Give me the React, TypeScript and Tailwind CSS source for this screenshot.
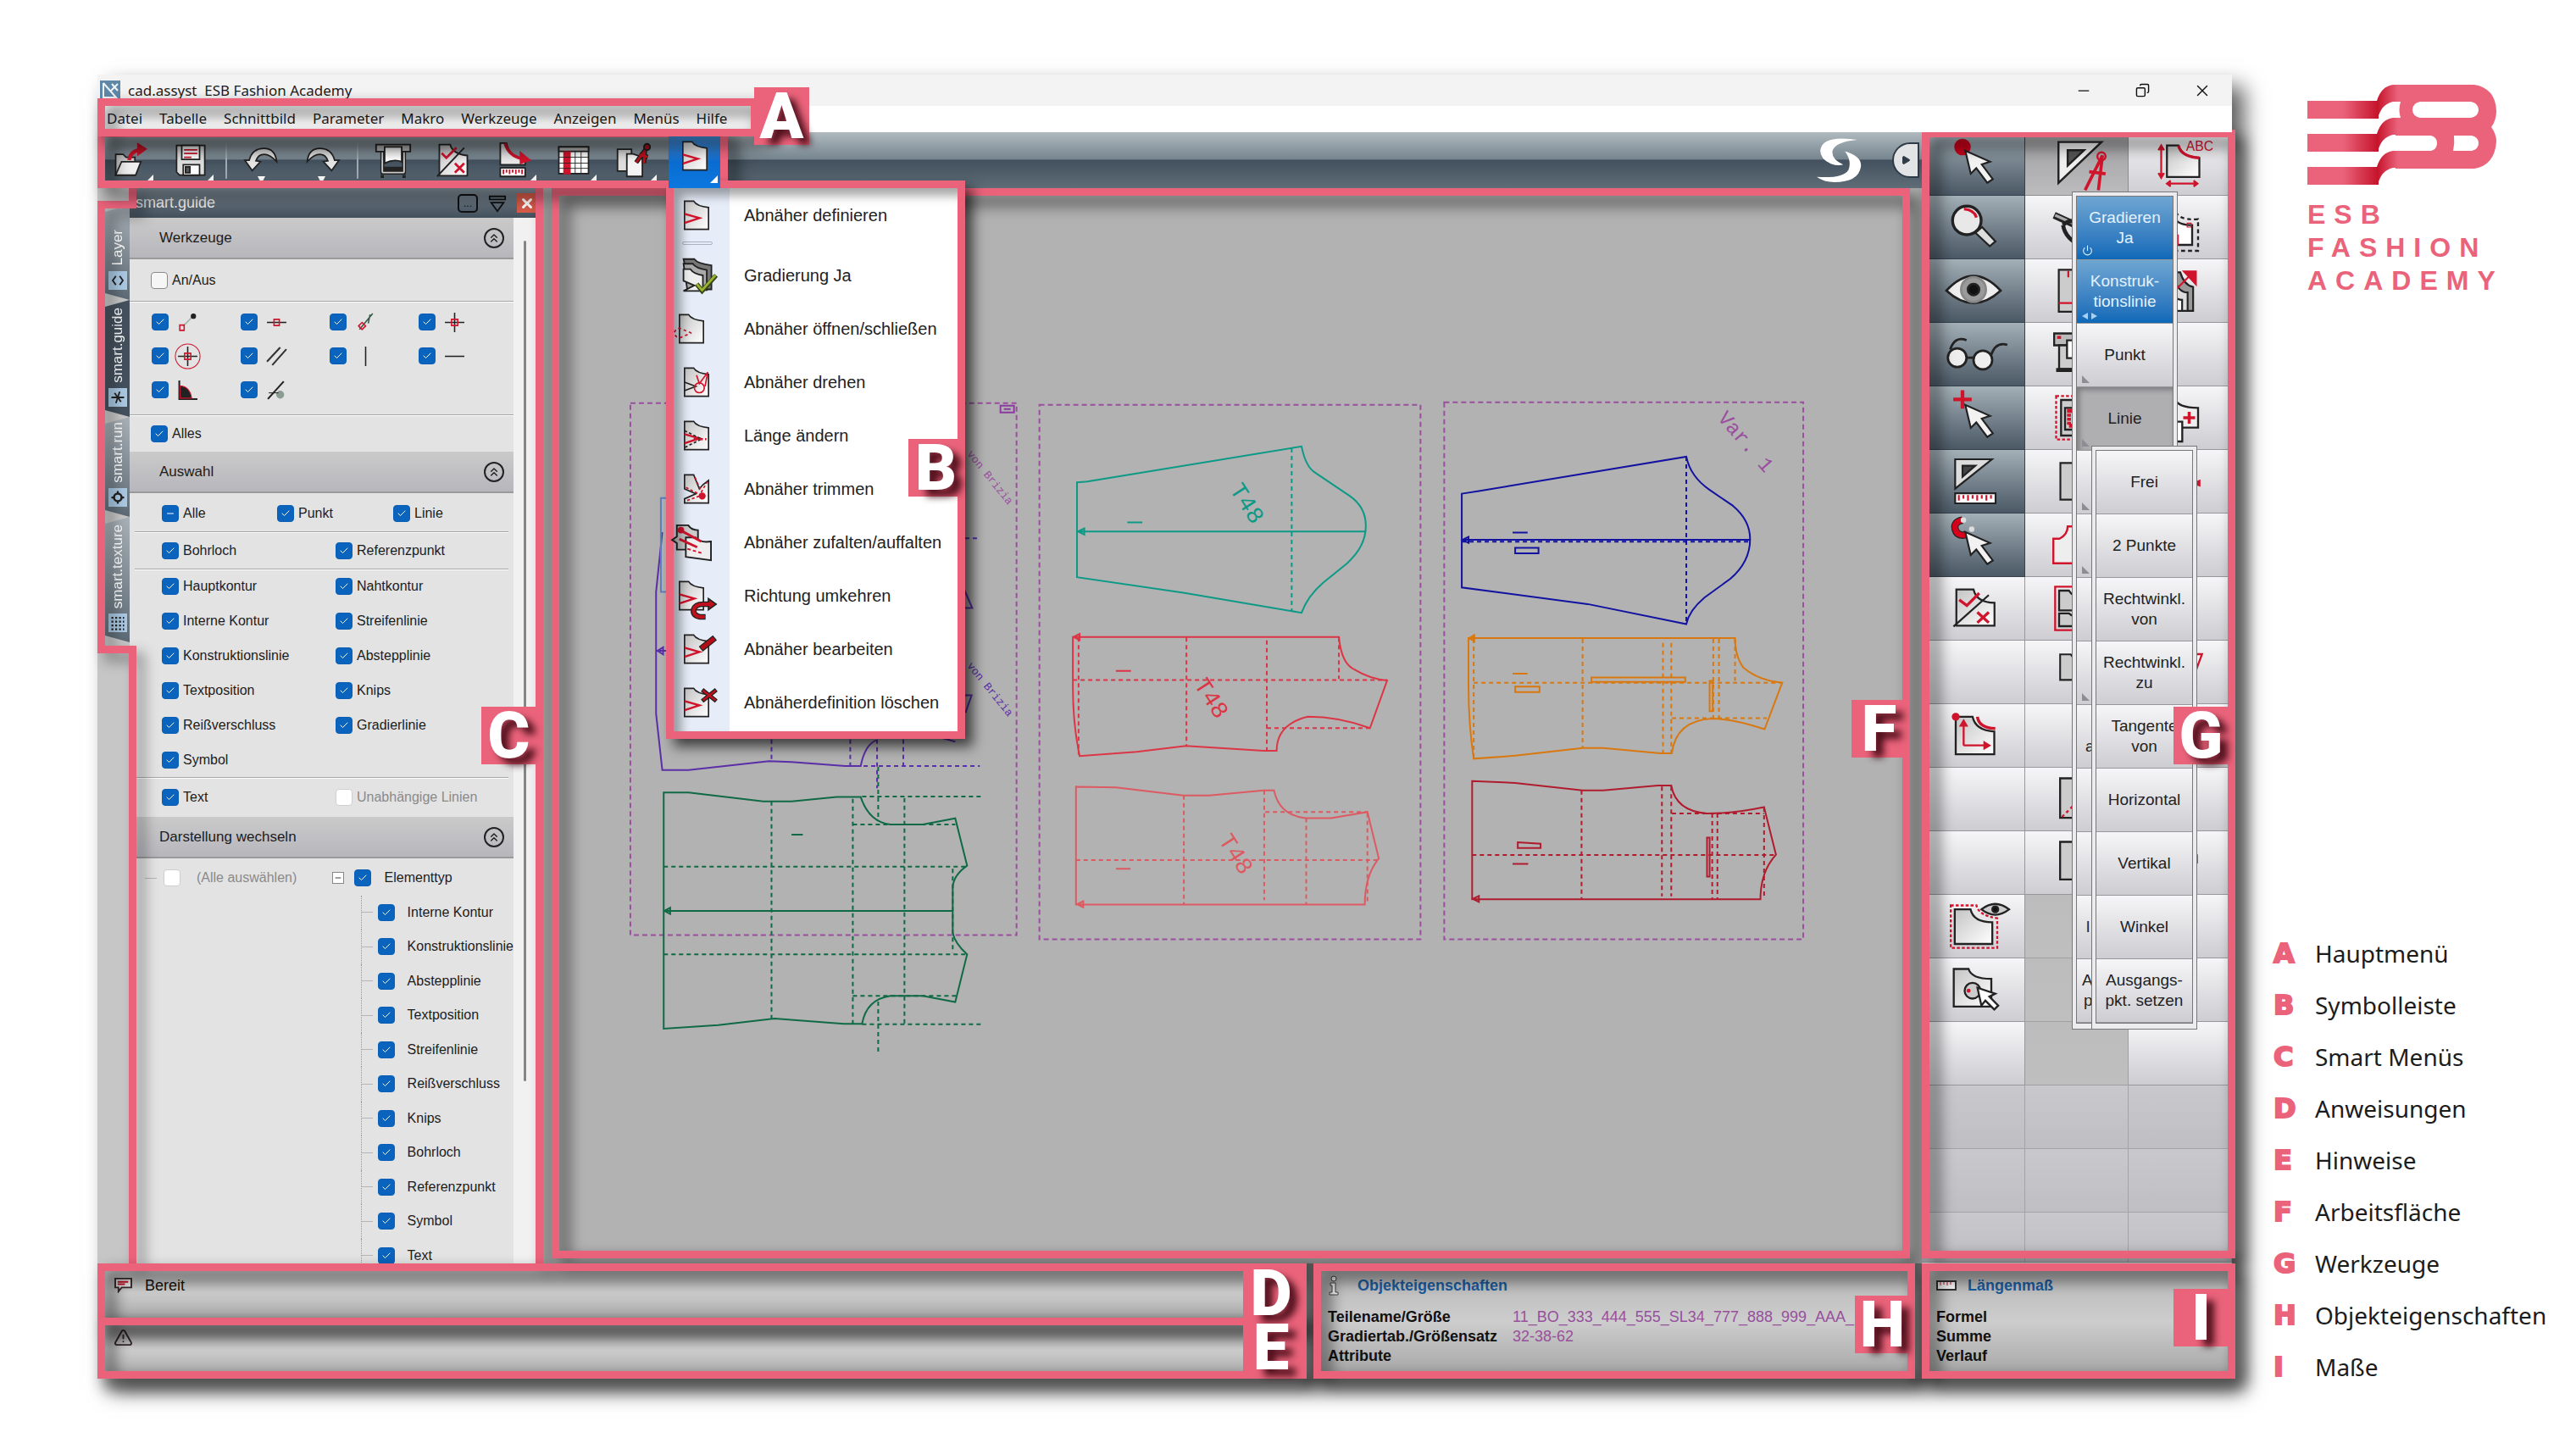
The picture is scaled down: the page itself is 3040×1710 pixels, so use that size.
import React from 'react';
import { Check, Minus, X, ChevronsUp, Copy, Play, AlertTriangle, Power } from 'lucide-react';

const MENU = ['Datei', 'Tabelle', 'Schnittbild', 'Parameter', 'Makro', 'Werkzeuge', 'Anzeigen', 'Menüs', 'Hilfe'];

const LINE_TYPES = [
  'Hauptkontur', 'Nahtkontur',
  'Interne Kontur', 'Streifenlinie',
  'Konstruktionslinie', 'Abstepplinie',
  'Textposition', 'Knips',
  'Reißverschluss', 'Gradierlinie',
  'Symbol'
];

const TREE = [
  'Interne Kontur', 'Konstruktionslinie', 'Abstepplinie', 'Textposition', 'Streifenlinie', 'Reißverschluss',
  'Knips', 'Bohrloch', 'Referenzpunkt', 'Symbol', 'Text'
];

const LEGEND = [
  ['A', 'Hauptmenü'], ['B', 'Symbolleiste'], ['C', 'Smart Menüs'], ['D', 'Anweisungen'], ['E', 'Hinweise'],
  ['F', 'Arbeitsfläche'], ['G', 'Werkzeuge'], ['H', 'Objekteigenschaften'], ['I', 'Maße']
];

const K = '#222';
const R = '#d0142c';

/* ---------- small building blocks ---------- */

const Icon: React.FC<{ children: React.ReactNode; className?: string }> = ({ children, className = 'w-12 h-12' }) => (
  <svg viewBox="0 0 48 48" className={`shrink-0 overflow-visible ${className}`} fill="none" stroke={K} strokeWidth="2" aria-hidden="true">
    {children}
  </svg>
);

const Letter: React.FC<{ letter: string }> = ({ letter }) => (
  <span className="text-[76px] leading-[64px] font-black text-white font-['Roboto','Liberation_Sans',sans-serif] [text-shadow:9px_8px_8px_rgba(50,0,10,0.85)]">
    {letter}
  </span>
);

const Badge: React.FC<{ letter: string; className: string }> = ({ letter, className }) => (
  <div className={`absolute z-40 flex h-[68px] w-[65px] items-center justify-center bg-[#ea637b] ${className}`}>
    <Letter letter={letter} />
  </div>
);

const Frame: React.FC<{ className: string }> = ({ className }) => (
  <div className={`pointer-events-none absolute z-20 border-[9px] border-[#ea637b] drop-shadow-[10px_10px_9px_rgba(0,0,0,0.7)] ${className}`} />
);

const Tick: React.FC<{ label?: string; name?: string; state?: 'on' | 'off' | 'mixed'; disabled?: boolean; gap?: string }> = ({
  label, name, state = 'on', disabled, gap = 'gap-[5px]'
}) => (
  <label className={`flex items-center whitespace-nowrap ${gap} ${disabled ? 'text-[#8a8a8a]' : ''}`}>
    <span className="relative flex h-[20px] w-[20px] shrink-0">
      <input
        type="checkbox"
        aria-label={label ? undefined : name}
        defaultChecked={state !== 'off'}
        disabled={disabled}
        className="h-[20px] w-[20px] appearance-none rounded-[4px] border border-[#8b8b8b] bg-[#f6f6f6] checked:border-[#0a5fb5] checked:bg-[#0a63bd] disabled:border-[#cfcfcf] disabled:bg-white"
      />
      {state === 'on' && <Check className="pointer-events-none absolute inset-0 m-auto h-[12px] w-[12px] text-white" />}
      {state === 'mixed' && <Minus className="pointer-events-none absolute inset-0 m-auto h-[12px] w-[12px] text-white" />}
    </span>
    {label}
  </label>
);

const SectionHead: React.FC<{ title: string }> = ({ title }) => (
  <button type="button" className="flex h-[49px] w-full items-center justify-between border-b-2 border-[#9a9a9c] bg-gradient-to-b from-[#cacaca] to-[#b7b6bc] pr-[11px] pl-[35px] text-[17px]">
    {title}
    <span className="flex h-[24px] w-[24px] items-center justify-center rounded-full border-2 border-[#222]">
      <ChevronsUp className="h-[16px] w-[16px]" />
    </span>
  </button>
);

/* ---------- toolbar icons ---------- */

const OpenIcon = () => (
  <Icon className="h-[42px] w-[42px]">
    <path d="M4 16h10l4 4h12v24H4z" fill="#c9c9c9" />
    <path d="M12 26h26l-7 18H4z" fill="#eee" />
    <path d="M22 24Q24 12 36 10" stroke={R} strokeWidth="5" />
    <path d="M34 2l11 7-11 8z" fill={R} stroke={R} />
  </Icon>
);

const SaveIcon = () => (
  <Icon className="h-[42px] w-[42px]">
    <path d="M5 4h38v40H9l-4-4z" fill="#ddd" />
    <path d="M12 4h24v19H12z" fill="#fff" />
    <path d="M15 10h18M15 15h18M15 20h10" stroke={R} />
    <path d="M14 30h22v14H14z" fill="#fff" />
    <path d="M17 33h6v8h-6z" fill="#555" />
  </Icon>
);

const TurnIcon: React.FC<{ flip?: boolean }> = ({ flip }) => (
  <Icon className={`h-[42px] w-[42px] ${flip ? '-scale-x-100' : ''}`}>
    <path d="M1 24l10 14 11-12-6-1q3-9 11-9 8 0 17 10Q42 8 27 8 11 8 7 24z" fill="#e4e4e4" />
  </Icon>
);

const PlotterIcon = () => (
  <Icon className="h-[44px] w-[44px]">
    <path d="M2 4h44v9H2z" fill="#bbb" />
    <path d="M13 7h22v19q-10-4-22 2z" fill="#fff" />
    <path d="M10 13v28M38 13v28M8 40h32M11 35h26" stroke={K} strokeWidth="5" />
    <path d="M10 14v26M38 14v26M10 40h28" stroke="#ccc" strokeWidth="2" />
    <path d="M8 45h4M36 45h4" strokeWidth="4" />
  </Icon>
);

const CheckIcon = () => (
  <Icon className="h-[44px] w-[44px]">
    <path d="M6 4h14q3 12 22 14v26H6z" fill="url(#paper)" />
    <path d="M3 45L38 8" />
    <path d="M9 15l6 6 13-13" stroke={R} strokeWidth="3" />
    <path d="M26 28l12 12M38 28L26 40" stroke={R} strokeWidth="3" />
  </Icon>
);

const RulerPieceIcon = () => (
  <Icon className="h-[44px] w-[44px]">
    <path d="M7 2h8q3 17 24 22v6H7z" fill="#e8e8e8" />
    <path d="M13 2q5 17 22 20" stroke={R} strokeWidth="4" />
    <path d="M33 14l12 10-12 4z" fill={R} stroke={R} />
    <path d="M7 34h32v11H7z" fill="#fff" />
    <path d="M11 36v6M15 36v4M19 36v6M23 36v4M27 36v6M31 36v4M35 36v6" stroke={R} />
  </Icon>
);

const TableIcon = () => (
  <Icon className="h-[42px] w-[42px]">
    <path d="M4 6h40v36H4z" fill="#fff" />
    <path d="M4 6h40v6H4z" fill="#bbb" />
    <path d="M11 13h8v29h-8z" fill={R} stroke={R} />
    <path d="M4 20h40M4 28h40M4 35h40M26 12v30M34 12v30" strokeWidth="1" />
  </Icon>
);

const CopyPieceIcon = () => (
  <Icon className="h-[44px] w-[44px]">
    <path d="M3 10h18v28H3z" fill="#ddd" />
    <path d="M15 16h8l12 4v25H15z" fill="#f4f4f4" />
    <path d="M43 5L27 27M38 12l-1 16M31 17l11 3" stroke={K} strokeWidth="6" />
    <path d="M43 5L27 27M38 12l-1 16M31 17l11 3" stroke="#c0101c" strokeWidth="3" />
    <circle cx="41" cy="7" r="4" fill="#c0101c" />
  </Icon>
);

const DartIcon: React.FC<{ extra?: React.ReactNode; dart?: boolean; size?: string }> = ({ extra, dart = true, size = 'w-[40px] h-[40px]' }) => (
  <Icon className={size}>
    <path d="M7 4h13q4 7 21 9v31H7z" fill="url(#paper)" />
    {dart && <path d="M7 22l21 6-21 7" stroke={R} strokeWidth="3" />}
    {extra}
  </Icon>
);

const DART_MENU: { label: string; icon: React.ReactNode }[] = [
  { label: 'Abnäher definieren', icon: <DartIcon /> },
  {
    label: 'Gradierung Ja',
    icon: (
      <Icon className="h-[44px] w-[44px]">
        <path d="M5 3h14q4 6 22 8v31H14z" fill="#777" />
        <path d="M5 9h12q4 6 18 8v26H10z" fill="#aaa" />
        <path d="M5 16h9q4 6 16 8v20H5l14-7-14-6z" fill="#eee" />
        <path d="M22 35l7 9 18-20" stroke="#39451a" strokeWidth="6" />
        <path d="M22 35l7 8 17-19" stroke="#9ab52c" strokeWidth="3" />
      </Icon>
    )
  },
  {
    label: 'Abnäher öffnen/schließen',
    icon: <DartIcon size="w-[40px] h-[40px] -ml-[6px]" dart={false} extra={<path d="M24 30l-17-7q-7 2-7 7t7 7l17-7" stroke={R} strokeDasharray="4 4" />} />
  },
  {
    label: 'Abnäher drehen',
    icon: <DartIcon dart={false} extra={<><path d="M7 24l16 6-16 6" /><circle cx="28" cy="32" r="7" stroke={R} /><path d="M24 14l4 12 12-16-4 20" stroke={R} /></>} />
  },
  {
    label: 'Länge ändern',
    icon: <DartIcon extra={<><path d="M7 17l24 12-24 12" strokeDasharray="4 3" /><path d="M20 29h18" stroke={R} strokeDasharray="5 3" strokeWidth="3" /></>} />
  },
  {
    label: 'Abnäher trimmen',
    icon: (
      <Icon className="h-[40px] w-[40px]">
        <path d="M7 4h13l8 20 5-6 8-6v32H7v-6l16-7-16-7z" fill="url(#paper)" />
        <path d="M9 22l22 11-22 8M22 8l9 20 8-14" stroke={R} strokeDasharray="4 3" />
        <circle cx="32" cy="34" r="4" fill={R} stroke={R} />
      </Icon>
    )
  },
  {
    label: 'Abnäher zufalten/auffalten',
    icon: (
      <Icon className="-ml-[8px] h-[46px] w-[46px]">
        <path d="M5 3h14q4 6 12 6v24H5v-8l-6-4 6-4z" fill="#ccc" />
        <path d="M16 18h12q6 7 19 5v23l-31-4z" fill="#eee" />
        <path d="M9 9l26 14M8 20l22 10" stroke={R} strokeWidth="3" />
        <path d="M18 32l20 6" stroke={R} strokeDasharray="4 3" />
        <circle cx="10" cy="9" r="3" fill={R} stroke={R} />
      </Icon>
    )
  },
  {
    label: 'Richtung umkehren',
    icon: (
      <DartIcon
        size="w-[40px] h-[40px] -ml-[6px]"
        extra={<><path d="M44 54h-8q-10-2-9-10 2-8 14-8h8" stroke={K} strokeWidth="8" /><path d="M48 28l11 8-11 8z" fill="#c0101c" /><path d="M43 54h-7q-10-2-9-10 2-8 14-8h9" stroke="#c0101c" strokeWidth="5" /></>}
      />
    )
  },
  {
    label: 'Abnäher bearbeiten',
    icon: <DartIcon extra={<><path d="M30 24L50 8" stroke={K} strokeWidth="9" /><path d="M31 23L49 9" stroke="#b30d18" strokeWidth="6" /></>} />
  },
  {
    label: 'Abnäherdefinition löschen',
    icon: <DartIcon extra={<><path d="M32 6l20 16M52 6L32 22" stroke={K} strokeWidth="6" /><path d="M33 7l18 14M51 7L33 21" stroke="#c0101c" strokeWidth="3" /></>} />
  }
];

/* ---------- smart.guide snap icons ---------- */

const SNAPS: { name: string; icon: React.ReactNode }[] = [
  { name: 'Endpunkt', icon: <><path d="M14 32L34 12" stroke="#9fb5a8" strokeWidth="3" /><circle cx="37" cy="10" r="5" fill={K} /><path d="M6 30h10v12H6z" stroke={R} strokeWidth="3" /></> },
  { name: 'Mittelpunkt', icon: <><path d="M2 24h44" strokeWidth="3" /><path d="M18 17h12v14H18z" stroke={R} strokeWidth="3" /></> },
  { name: 'Tangente', icon: <><path d="M10 40L40 4M34 6l-4 20" stroke="#355a48" strokeWidth="3" /><path d="M8 32l8-8 8 8-8 8z" stroke={R} strokeWidth="3" /></> },
  { name: 'Schnittpunkt', icon: <><path d="M2 24h44M24 2v44" strokeWidth="3" /><path d="M17 17h14v14H17z" stroke={R} strokeWidth="3" /></> },
  { name: 'Fangkreis', icon: <><path d="M2 24h44M24 2v44" strokeWidth="3" /><path d="M17 17h14v14H17z" stroke={R} strokeWidth="3" /><circle cx="24" cy="24" r="28" stroke={R} /></> },
  { name: 'Parallele', icon: <path d="M2 36L32 4M14 44L46 8" stroke="#333" strokeWidth="4" /> },
  { name: 'Vertikal', icon: <path d="M24 2v44" strokeWidth="3" /> },
  { name: 'Horizontal', icon: <path d="M2 24h44" strokeWidth="3" /> },
  { name: 'Winkel', icon: <><path d="M5 2v42h41" strokeWidth="4" /><path d="M7 14q22 2 26 28H7z" fill={K} stroke={R} /></> },
  { name: 'Lot', icon: <><path d="M4 44L40 4" strokeWidth="4" /><circle cx="32" cy="34" r="9" fill="#8b9c92" stroke="none" /><path d="M6 30h22" /></> }
];

/* ---------- tool palette icons ---------- */

const Pointer: React.FC<{ children?: React.ReactNode }> = ({ children }) => (
  <Icon className="h-[52px] w-[52px]">
    {children}
    <path d="M15 10l6 25 6-6 12 16 6-4-12-16 9-3z" fill="#f2f2f2" />
  </Icon>
);

const PALETTE: (React.ReactNode | null)[][] = [
  [
    <Pointer><circle cx="12" cy="6" r="9" fill="#c4001a" stroke="none" /></Pointer>,
    <Icon className="h-[58px] w-[58px]"><path d="M6 3h42L6 43z" fill="#eee" /><path d="M15 11h16L15 26z" fill="#555" /><path d="M49 16L32 50M49 16l-4 34M36 32l16 2" stroke={R} strokeWidth="3" /><circle cx="48" cy="17" r="4" stroke={R} /></Icon>,
    <Icon className="h-[54px] w-[54px]"><path d="M10 5h12q3 12 22 13v20H10z" fill="url(#paper)" /><path d="M22 5q3 12 22 13" stroke={R} strokeWidth="3" /><path d="M4 6v32M10 45h32" stroke={R} /><path d="M1 10l3-5 3 5M1 34l3 5 3-5M14 42l-4 3 4 3M38 42l4 3-4 3" fill={R} stroke={R} /><text x="30" y="11" fontSize="14" fill={R} stroke="none" fontFamily="Liberation Sans, sans-serif">ABC</text></Icon>
  ],
  [
    <Icon className="h-[54px] w-[54px]"><path d="M26 30l15 14 6-5-14-15z" fill="#ddd" /><circle cx="17" cy="17" r="15" fill="#e8e8e8" strokeWidth="3" /><path d="M14 5q11 1 13 9" stroke={R} strokeWidth="3" /></Icon>,
    <Icon className="h-[56px] w-[56px]"><path d="M1 12l22 10" strokeWidth="7" /><path d="M2 12l20 9" stroke="#aaa" strokeWidth="3" /><path d="M10 22q8-8 22 0M10 22q2 14 20 22" strokeWidth="4" /></Icon>,
    <Icon className="h-[56px] w-[56px]"><path d="M6 14h12q3 8 18 8v20H6z" fill="#fff" /><path d="M18 2q0 16 24 14v32H2" strokeDasharray="4 3" /><path d="M31 20h4v4h-4zM18 32h4v10h-4z" stroke={R} strokeWidth="1" /></Icon>
  ],
  [
    <Icon className="h-[64px] w-[64px]"><path d="M0 24q24-26 48 0-24 22-48 0z" fill="#eee" /><circle cx="24" cy="23" r="11" fill="#9a9a9a" stroke="#888" /><circle cx="24" cy="23" r="5" fill="#111" /></Icon>,
    <Icon className="h-[54px] w-[54px]"><path d="M5 2h34v44H5z" fill="#ccc" /><path d="M15 3v7M5 37h30" stroke={R} /></Icon>,
    <Icon className="h-[52px] w-[52px]"><path d="M4 4h20q4 14 14 16v26H4z" fill="#999" /><path d="M4 12h14q4 14 14 14v20H4z" fill="#ddd" /><path d="M4 20h8q4 14 14 14v12H4z" fill="#fff" /><path d="M8 34L34 8" stroke={R} strokeWidth="2" /><path d="M28 3h13v14z" fill={R} stroke={R} /></Icon>
  ],
  [
    <Icon className="h-[66px] w-[66px]"><circle cx="10" cy="27" r="8" fill="#eee" /><circle cx="32" cy="29" r="8" fill="#eee" /><path d="M18 27h6M4 20Q8 8 18 12M39 25q4-12 14-9" /></Icon>,
    <Icon className="h-[56px] w-[56px]"><path d="M1 3h30v12H1z" fill="#bbb" /><path d="M6 15v24h24V15z" fill="#ccc" /><path d="M14 10h18v18H14z" fill="#fff" /><path d="M3 40h24" strokeWidth="4" /><path d="M4 7h4" stroke={R} strokeWidth="3" /></Icon>,
    null
  ],
  [
    <Pointer><path d="M2 4h20M12-6v20" stroke={R} strokeWidth="4" /></Pointer>,
    <Icon className="h-[56px] w-[56px]"><path d="M3 2h40v44H3z" stroke={R} strokeDasharray="3 2" /><path d="M8 6h30v36H8z" fill="#ccc" /><path d="M12 14h20v22H12z" /><path d="M16 17h12v15H16z" stroke={R} strokeWidth="4" strokeDasharray="3 1" /></Icon>,
    <Icon className="h-[56px] w-[56px]"><path d="M4 4h14q3 10 24 10v20H4z" fill="#eee" /><path d="M33 18v12M27 24h12" stroke={R} strokeWidth="3" /><path d="M4 28h22v20H4z" fill="#fff" /></Icon>
  ],
  [
    <Icon className="h-[52px] w-[52px]"><path d="M4 0h40L4 32z" fill="#ddd" /><path d="M12 7h14L12 19z" fill="#444" /><path d="M4 37h44v11H4z" fill="#fff" /><path d="M8 39v6M13 39v4M18 39v6M23 39v4M28 39v6M33 39v4M38 39v6M43 39v4" stroke={R} /></Icon>,
    <Icon className="h-[52px] w-[52px]"><path d="M6 4h30v40H6z" fill="#ccc" /></Icon>,
    <Icon className="h-[52px] w-[52px]"><path d="M36 26l10-4v8z" fill={R} stroke="none" /></Icon>
  ],
  [
    <Pointer>
      <path d="M12-3Q2-1 4 7t12 6" stroke={K} strokeWidth="8" />
      <path d="M12-3Q2-1 4 7t12 6" stroke="#d8001c" strokeWidth="6" />
      <circle cx="13" cy="-3" r="3" fill="#ddd" stroke="none" />
      <circle cx="22" cy="7" r="3" fill="#ddd" stroke="none" />
    </Pointer>,
    <Icon className="h-[58px] w-[58px]"><path d="M1 18h6q8-4 8-12h20v36H1z" fill="#eee" stroke={R} /></Icon>,
    <Icon className="h-[52px] w-[52px]"><path d="M20 28h20v10H20z" /></Icon>
  ],
  [
    <Icon className="h-[54px] w-[54px]"><path d="M6 4h18q3 14 22 14v24H6z" fill="url(#paper)" /><path d="M3 43L40 10" /><path d="M9 15l8 6 13-13M28 28l12 11M40 28L28 39" stroke={R} strokeWidth="3" /></Icon>,
    <Icon className="h-[56px] w-[56px]"><path d="M2 2h40v44H2z" stroke={R} /><path d="M6 6h10q4 7 14 8v12H6zM6 29h10q4 4 14 4v9H6z" fill="#ccc" /></Icon>,
    <Icon className="h-[52px] w-[52px]"><circle cx="36" cy="24" r="6" fill={R} stroke="none" /></Icon>
  ],
  [
    null,
    <Icon className="h-[50px] w-[50px]"><path d="M5 4h12q4 8 18 9v20H5z" fill="#ccc" /><path d="M22 16v28" stroke={R} /></Icon>,
    <Icon className="h-[56px] w-[56px]"><path d="M20 6h26L34 38z" fill="#fff" stroke={R} /></Icon>
  ],
  [
    <Icon className="h-[56px] w-[56px]"><path d="M6 5h17q3 14 22 15v23H6z" fill="url(#paper)" /><path d="M28 5q1 11 18 12" stroke={R} strokeWidth="3" /><path d="M14 34V12M14 34h24M11 14l3-5 3 5zM35 31l5 3-5 3z" stroke={R} fill={R} /><circle cx="6" cy="5" r="3" fill={R} stroke={R} /></Icon>,
    null,
    null
  ],
  [null, <Icon className="h-[56px] w-[56px]"><path d="M7 3h32v40H7z" fill="#ccc" /><path d="M9 42l20-20" stroke={R} strokeDasharray="3 3" /></Icon>, <Icon className="h-[52px] w-[52px]"><path d="M36 8v8M36 28v12" strokeWidth="4" stroke="#777" /></Icon>],
  [null, <Icon className="h-[56px] w-[56px]"><path d="M7 3h32v38H7z" fill="#ccc" /></Icon>, <Icon className="h-[52px] w-[52px]"><path d="M20 16h22v8H20z" fill="#fff" /><path d="M37 6v5M37 29v5" strokeWidth="4" /></Icon>],
  [
    <Icon className="h-[56px] w-[56px]"><path d="M1 3h26q2 10 21 13v30H1z" stroke={R} strokeDasharray="3 2" /><path d="M5 7h16q3 13 22 13v22H5z" fill="url(#paper)" /><path d="M32 7q14-11 28 0-14 11-28 0z" fill="#ccc" /><circle cx="46" cy="7" r="3" fill="#111" /></Icon>,
    null,
    <Icon className="h-[52px] w-[52px]"><path d="M20 10h20v22H20z" fill="#fff" stroke="#855" strokeDasharray="2 2" /></Icon>
  ],
  [
    <Icon className="h-[56px] w-[56px]"><path d="M4 3h15q3 10 23 10v28H4z" fill="url(#paper)" /><circle cx="23" cy="25" r="8" fill="#ccc" /><circle cx="19" cy="25" r="2" fill={R} stroke="none" /><path d="M28 22l4 18 4-5 9 9 4-4-9-9 6-3z" fill="#fff" /></Icon>,
    null,
    null
  ]
];

const cellTone = (row: number, col: number) => {
  if (row > 14) return 'bg-gradient-to-b from-[#c9c9cd] to-[#bebec3] border-[#a4a4a8]';
  if (col === 0 && row < 7) return 'bg-gradient-to-b from-[#a4b0b7] to-[#4b5966] border-[#36434f]';
  if (col === 1 && row === 0) return 'bg-gradient-to-b from-[#9f9fa1] to-[#bcbcbe] border-[#8c8c8e]';
  if (col === 1 && row >= 12) return 'bg-gradient-to-b from-[#bcbcbc] to-[#bfbfbf] border-[#a0a0a0]';
  return 'bg-gradient-to-b from-[#f6f6f8] to-[#cdcdd2] border-[#98989c]';
};

const PopCell: React.FC<{ children?: React.ReactNode; tone?: string; mark?: React.ReactNode }> = ({
  children, tone = 'bg-gradient-to-b from-[#f6f6f8] to-[#cdcdd2] text-[#222]', mark
}) => (
  <button type="button" className={`relative block h-[75px] w-full border-b border-[#98989c] text-center text-[19px] leading-[24px] ${tone}`}>
    {children}
    {mark && <span className="absolute bottom-[4px] left-[6px]">{mark}</span>}
  </button>
);

const Corner = () => (
  <svg viewBox="0 0 8 8" className="h-[9px] w-[9px]" aria-hidden="true"><path d="M0 0v8h8z" fill="#8d8d94" /></svg>
);

const BLUE = 'bg-gradient-to-b from-[#6ea6d2] to-[#0c69b8] text-[#e4f2ff]';

/* ---------- drawing area ---------- */

const Drawing = () => (
  <svg viewBox="640 222 1628 1268" className="block h-auto w-full" fill="none" strokeWidth="2" aria-label="Schnittteile">
    <g stroke="#9a4f9e" strokeDasharray="6 4">
      <path d="M743 476h456v628H743z" />
      <path d="M1226 478h450v631h-450z" />
      <path d="M1704 475h424v634h-424z" />
    </g>
    <path d="M1180 479h16v8h-16zM1184 483h8" stroke="#8c3aa0" />

    {/* left group: back part and its mirror */}
    <g transform="translate(700 440) scale(.3333 .523)" stroke="#5b2fa8">
      <path vectorEffect="non-scaling-stroke" d="M242 360L220 495V770L242 897H335L620 877L700 879L890 888H945Q960 840 1000 830M1235 825l45 8M220 628h60M225 628l20-8v16zM1312 490l28 41h-28M1312 728h26l-22 40" />
      <path vectorEffect="non-scaling-stroke" strokeDasharray="5 4" d="M629 828v48M908 828v60M1003 828v110M1096 828v60M955 888h412M1315 374h50" />
      <path vectorEffect="non-scaling-stroke" stroke="#5c7fc0" d="M262 283h-25v212h25" />
      <g stroke="#0f6a45">
        <path vectorEffect="non-scaling-stroke" d="M247 948H335L600 968H700L860 958H945Q975 1015 1050 1020H1165L1280 1006L1322 1113Q1271 1135 1271 1165V1265Q1280 1290 1322 1313L1280 1421L1165 1407H1050Q965 1415 950 1470H885L640 1458L440 1473L247 1481ZM247 1215H1271M250 1215l20-7v14zM700 1043h40" />
        <path vectorEffect="non-scaling-stroke" strokeDasharray="5 4" d="M247 1115H1322M247 1313H1322M629 968V1460M917 962V1470M1100 960V1470M1007 890V1010M1007 1420V1540M950 957H1370M950 1471H1370M917 1020H1280M917 1407H1285M1271 1120V1310" />
      </g>
    </g>

    {/* middle and right groups */}
    <g transform="translate(1200 440) scale(.6123 .4464)">
      <g stroke="#0c9a86">
        <path vectorEffect="non-scaling-stroke" d="M115 290L135 288L548 195Q556 250 575 265L640 325Q672 355 672 405Q672 460 635 505L590 555Q560 590 548 635L320 582L115 541ZM115 420H672M117 420l12-8v16zM212 396h29" />
        <path vectorEffect="non-scaling-stroke" strokeDasharray="5 4" d="M529 200V632" />
      </g>
      <g stroke="#1212a0">
        <path vectorEffect="non-scaling-stroke" d="M857 320L890 313L1290 222Q1298 275 1335 310L1380 352Q1413 390 1413 440Q1413 500 1375 545L1325 595Q1295 630 1290 665L1100 612L857 568ZM857 442H1413M858 442l12-8v16zM955 423h29M960 463h45v15h-45z" />
        <path vectorEffect="non-scaling-stroke" strokeDasharray="5 4" d="M1290 222V660M857 447H1413" />
      </g>
      <g stroke="#dc3545">
        <path vectorEffect="non-scaling-stroke" d="M107 699H620Q625 770 650 785Q680 810 713 814L680 940Q620 910 560 910Q500 930 500 1000H475L325 987L230 1003L120 1014Q107 930 107 830ZM108 699l12-8v16zM190 789h29" />
        <path vectorEffect="non-scaling-stroke" strokeDasharray="5 4" d="M107 813H713M118 700V1010M326 700V987M481 708V1000M620 700V810M481 940H680" />
      </g>
      <g stroke="#d9780f">
        <path vectorEffect="non-scaling-stroke" d="M870 702H1384Q1384 750 1400 780Q1430 815 1475 820L1441 943Q1380 915 1340 915Q1270 920 1262 1007H1240L1130 993H1090L960 1013L880 1021Q870 930 870 830ZM871 702l10-8v16zM955 796h29M960 830h47v15h-47zM1107 806h181v12h-181zM1335 815h6v80h-6z" />
        <path vectorEffect="non-scaling-stroke" strokeDasharray="5 4" d="M880 820H1475M880 704V1018M1090 704V993M1245 715V1005M1261 715V1005M1342 704V915M1353 704V915M1384 704V815M1262 914H1445" />
      </g>
      <g stroke="#dd5a62">
        <path vectorEffect="non-scaling-stroke" d="M113 1095L190 1097L320 1118H370L475 1105H495Q505 1170 555 1178H605L675 1162L697 1285Q670 1330 670 1407H113ZM115 1406l12-8v16zM190 1312h28" />
        <path vectorEffect="non-scaling-stroke" strokeDasharray="5 4" d="M113 1289H695M321 1118V1407M476 1105V1395M557 1178V1407M675 1165V1405M478 1162H675" />
      </g>
      <g stroke="#b01c2e">
        <path vectorEffect="non-scaling-stroke" d="M877 1080L960 1085L1090 1105H1130L1235 1092H1261Q1270 1160 1330 1166Q1380 1166 1440 1149L1463 1275Q1433 1320 1433 1393H877ZM878 1392l12-8v16zM955 1299h30M965 1242l44 4v11h-44zM1330 1230h5v103h-5z" />
        <path vectorEffect="non-scaling-stroke" strokeDasharray="5 4" d="M877 1276H1463M1088 1105V1392M1243 1095V1385M1261 1095V1385M1340 1166V1392M1350 1166V1392M1262 1166H1440M1440 1150V1390" />
      </g>
    </g>

    <g stroke="none" fontFamily="Liberation Mono, monospace">
      <text fontSize="28" fill="#0c9a86" transform="translate(1450 578) rotate(57)">T48</text>
      <text fontSize="28" fill="#dc3545" transform="translate(1408 808) rotate(57)">T48</text>
      <text fontSize="28" fill="#dd5a62" transform="translate(1437 992) rotate(57)">T48</text>
      <text fontSize="24" fill="#9a4f9e" transform="translate(2026 494) rotate(49)">Var. 1</text>
      <text fontSize="13" fill="#9a4f9e" transform="translate(1140 536) rotate(51)">von Brizia</text>
      <text fontSize="13" fill="#5b2fa8" transform="translate(1140 786) rotate(51)">von Brizia</text>
    </g>
  </svg>
);

/* ---------- panels ---------- */

const SIDE_TABS = [
  { label: 'Layer', height: 'h-[112px]', active: false, icon: <path d="M18 10L8 24l10 14M30 10l10 14-10 14" strokeWidth="5" /> },
  { label: 'smart.guide', height: 'h-[138px]', active: true, icon: <path d="M4 24h40M30 6L18 42M14 10l20 28" strokeWidth="5" /> },
  { label: 'smart.run', height: 'h-[118px]', active: false, icon: <><circle cx="24" cy="24" r="12" strokeWidth="7" /><path d="M24 4v8M24 36v8M4 24h8M36 24h8" strokeWidth="6" /></> },
  { label: 'smart.texture', height: 'h-[148px]', active: false, icon: <path d="M4 8h40M4 20h40M4 32h40M4 44h40" strokeWidth="6" strokeDasharray="6 6" /> }
];

const SmartGuide = () => (
  <aside className="relative flex w-[526px] shrink-0 bg-[#c6c6c6] text-[16px]">
    <div className="flex w-[38px] shrink-0 flex-col pt-[20px] pl-[9px]">
      {SIDE_TABS.map(tab => (
        <button
          key={tab.label}
          type="button"
          className={`flex ${tab.height} w-full flex-col items-center justify-end gap-[6px] pb-[12px] text-[17px] leading-[22px] text-white [clip-path:polygon(0_8px,100%_0,100%_100%,0_calc(100%-8px))] ${tab.active ? 'bg-[#44515d]' : 'bg-gradient-to-b from-[#a9b1b7] to-[#5d6a75]'}`}
        >
          <span className="rotate-180 [writing-mode:vertical-rl]">{tab.label}</span>
          <span className="flex h-[22px] w-[22px] items-center justify-center bg-[#a9c8e2]">
            <Icon className="h-[18px] w-[18px]">{tab.icon}</Icon>
          </span>
        </button>
      ))}
    </div>

    <div className="min-w-0 flex-1 bg-[#f1f1f2] pr-[8px]">
      <div className="flex h-[35px] items-center justify-between bg-gradient-to-b from-[#83909a] to-[#42505c] pl-[7px] text-[18px] text-[#eef2f5]">
        smart.guide
        <span className="flex items-center gap-[12px] text-[#111]">
          <button type="button" aria-label="Andocken" className="h-[22px] w-[24px] rounded-[5px] border-2 border-[#111] text-[12px] leading-[16px]">...</button>
          <svg viewBox="0 0 24 24" className="h-[22px] w-[22px]" fill="none" stroke="#111" strokeWidth="2" aria-hidden="true"><path d="M2 3h20v4H2zM4 11h16l-8 11z" /></svg>
          <button type="button" aria-label="Schließen" className="flex h-[23px] w-[23px] items-center justify-center bg-[#d65b49] text-white"><X className="h-[18px] w-[18px]" strokeWidth={4} /></button>
        </span>
      </div>

      <div className="flex">
        <div className="min-w-0 flex-1 bg-[#e3e3e3]">
          <SectionHead title="Werkzeuge" />
          <div className="flex h-[50px] items-center border-b border-[#a6a6a6] pl-[25px] shadow-[0_1px_0_white]"><Tick label="An/Aus" state="off" /></div>
          <div className="grid h-[134px] grid-cols-[repeat(4,105px)] grid-rows-[repeat(3,40px)] items-center border-b border-[#a6a6a6] pt-[4px] pl-[26px] shadow-[0_1px_0_white]">
            {SNAPS.map(snap => (
              <span key={snap.name} className="flex items-center gap-[10px]">
                <Tick name={snap.name} />
                <Icon className="h-[25px] w-[25px]">{snap.icon}</Icon>
              </span>
            ))}
          </div>
          <div className="flex h-[43px] items-center pl-[25px]"><Tick label="Alles" /></div>

          <SectionHead title="Auswahl" />
          <div className="mx-[6px]">
            <div className="grid h-[46px] grid-cols-[136px_137px_1fr] items-center border-b border-[#a6a6a6] pt-[3px] pl-[32px] shadow-[0_1px_0_white]">
              <Tick label="Alle" state="mixed" />
              <Tick label="Punkt" />
              <Tick label="Linie" />
            </div>
            <div className="grid h-[44px] grid-cols-[205px_1fr] items-center border-b border-[#a6a6a6] pl-[32px] shadow-[0_1px_0_white]">
              <Tick label="Bohrloch" />
              <Tick label="Referenzpunkt" />
            </div>
            <div className="grid h-[246px] auto-rows-fr grid-cols-[205px_1fr] items-center border-b border-[#a6a6a6] pl-[32px] shadow-[0_1px_0_white]">
              {LINE_TYPES.map(t => <Tick key={t} label={t} />)}
            </div>
            <div className="grid h-[46px] grid-cols-[205px_1fr] items-center pl-[32px]">
              <Tick label="Text" />
              <Tick label="Unabhängige Linien" state="off" disabled />
            </div>
          </div>

          <SectionHead title="Darstellung wechseln" />
          <div className="flex h-[478px] overflow-hidden pt-[3px]">
            <div className="flex h-[40px] w-[239px] items-center gap-[8px] pl-[18px]">
              <span className="w-[14px] border-t border-[#b5b5b5]" />
              <Tick label="(Alle auswählen)" state="off" disabled gap="gap-[19px]" />
            </div>
            <ul className="grid h-[486px] flex-1 auto-rows-fr">
              <li className="flex items-center gap-[12px]">
                <button type="button" aria-label="Zuklappen" className="flex h-[14px] w-[14px] items-center justify-center border border-[#888] bg-white"><Minus className="h-[10px] w-[10px]" /></button>
                <Tick label="Elementtyp" gap="gap-[16px]" />
              </li>
              {TREE.map(t => (
                <li key={t} className="ml-[34px] flex items-center gap-[6px] border-l border-dotted border-[#999]">
                  <span className="w-[13px] border-t border-[#b5b5b5]" />
                  <Tick label={t} gap="gap-[15px]" />
                </li>
              ))}
            </ul>
          </div>
        </div>
        <div className="flex w-[27px] justify-center pt-[27px]"><span className="h-[992px] w-[3px] rounded bg-[#858587]" /></div>
      </div>
    </div>

    {/* outline: tab strip plus panel */}
    <div className="pointer-events-none absolute inset-0 z-10 drop-shadow-[9px_9px_8px_rgba(0,0,0,0.4)]">
      <div className="absolute top-[15px] left-0 h-[534px] w-[46px] border-y-[9px] border-l-[9px] border-[#ea637b]" />
      <div className="absolute top-0 left-[37px] h-[24px] w-[9px] bg-[#ea637b]" />
      <div className="absolute top-[540px] bottom-0 left-[37px] w-[9px] bg-[#ea637b]" />
      <div className="absolute inset-y-0 right-0 w-[9px] bg-[#ea637b]" />
    </div>
    <Badge letter="C" className="top-[612px] right-[8px]" />
  </aside>
);

const Divider = () => <span className="flex w-[13px] justify-center"><span className="h-[44px] w-[2px] bg-[#9fabb3]" /></span>;

const ToolButton: React.FC<{ children: React.ReactNode; corner?: boolean; down?: boolean }> = ({ children, corner, down }) => (
  <button type="button" className="relative flex h-[60px] w-[71px] items-center justify-center">
    {children}
    {corner && <svg viewBox="0 0 8 8" className="absolute right-[8px] bottom-[4px] h-[9px] w-[9px]" aria-hidden="true"><path d="M8 0v8H0z" fill="#fff" /></svg>}
    {down && <svg viewBox="0 0 8 8" className="absolute bottom-[2px] left-[31px] h-[9px] w-[9px]" aria-hidden="true"><path d="M0 0h8L4 8z" fill="#fff" /></svg>}
  </button>
);

const Toolbar = () => (
  <div className="relative z-30 flex h-[66px] justify-between bg-[linear-gradient(to_bottom,#b0babf_0%,#76858f_48%,#43515e_50%,#5e6d78_100%)]">
    <div className="relative flex w-[744px] items-center pl-[3px]">
      <ToolButton corner><OpenIcon /></ToolButton>
      <ToolButton corner><SaveIcon /></ToolButton>
      <Divider />
      <ToolButton down><TurnIcon /></ToolButton>
      <ToolButton down><TurnIcon flip /></ToolButton>
      <Divider />
      <ToolButton><PlotterIcon /></ToolButton>
      <ToolButton><CheckIcon /></ToolButton>
      <ToolButton corner><RulerPieceIcon /></ToolButton>
      <ToolButton corner><TableIcon /></ToolButton>
      <ToolButton corner><CopyPieceIcon /></ToolButton>
      <button type="button" aria-label="Abnäher" className="relative z-40 mt-[5px] ml-[6px] flex h-[61px] w-[61px] justify-center bg-gradient-to-b from-[#3b7fc0] via-[#0a6cd0] to-[#0b78e0] pt-[3px]">
        <DartIcon />
        <svg viewBox="0 0 8 8" className="absolute right-[3px] bottom-[6px] h-[9px] w-[9px]" aria-hidden="true"><path d="M8 0v8H0z" fill="#fff" /></svg>
      </button>
      <Frame className="-top-[3px] left-0 h-[69px] w-full" />
      <div className="absolute top-[57px] left-[671px] z-30 w-[353px] border-[9px] border-[#ea637b] bg-gradient-to-r from-[#e6ecf8] from-[66px] to-white to-[66px] pb-[3px] shadow-[9px_9px_14px_rgba(0,0,0,0.65)]">
        {DART_MENU.map((item, i) => (
          <React.Fragment key={item.label}>
            <button type="button" className="flex h-[63px] w-full items-center text-[20px] whitespace-nowrap text-[#222]">
              <span className="flex w-[66px] shrink-0 justify-start pl-[7px]">{item.icon}</span>
              <span className="pl-[17px]">{item.label}</span>
            </button>
            {i === 0 && <div className="ml-[10px] mb-[4px] h-[4px] w-[36px] rounded-full border border-[#aab2c2]" />}
          </React.Fragment>
        ))}
        <div className="pointer-events-none absolute inset-0 shadow-[inset_9px_9px_12px_rgba(0,0,0,0.35)]" />
        <Badge letter="B" className="top-[296px] -right-[7px]" />
      </div>
    </div>
    <div className="flex items-center gap-[36px] pr-[3px]">
      <svg viewBox="0 0 50 50" className="h-[52px] w-[54px]" fill="white" aria-label="S"><path d="M46 2Q6-4 4 14q0 10 12 15 8 3 14 1Q16 24 18 14 22 4 46 2z" /><path d="M32 15q20 6 18 18-3 17-30 17-12 0-20-6 30 2 36-8Q40 26 32 15z" /></svg>
      <button type="button" aria-label="Leiste ausblenden" className="flex h-[42px] w-[32px] items-center justify-center rounded-l-full border-2 border-[#2f3c47] bg-[#e2e4e6]">
        <Play className="h-[12px] w-[12px] fill-[#2f3c47] text-[#2f3c47]" />
      </button>
    </div>
  </div>
);

const Tools = () => (
  <div className="relative w-[366px] shrink-0">
    {Array.from({ length: 18 }).map((_, row) => (
      <div key={row} className={`grid grid-cols-3 ${row === 17 ? 'h-[59px]' : 'h-[75px]'}`}>
        {[0, 1, 2].map(col => (
          <button key={col} type="button" aria-label={`Werkzeug ${row + 1}.${col + 1}`} className={`flex items-center justify-center border-r border-b ${cellTone(row, col)}`}>
            {PALETTE[row]?.[col]}
          </button>
        ))}
      </div>
    ))}

    <div className="absolute top-[70px] left-[177px] w-[125px] border border-[#77777a] bg-[#ececee] p-[4px] pb-[6px]">
      <div className="border border-[#77777a]">
        <PopCell tone={BLUE} mark={<Power className="h-[13px] w-[13px]" />}>Gradieren<br />Ja</PopCell>
        <PopCell tone={BLUE} mark={<svg viewBox="0 0 18 8" className="h-[8px] w-[18px]" aria-hidden="true"><path d="M7 0v8L0 4zM11 0v8l7-4z" fill="#a9d0f0" /></svg>}>Konstruk-<br />tionslinie</PopCell>
        <PopCell mark={<Corner />}>Punkt</PopCell>
        <PopCell tone="bg-[#afafb2] text-[#222] shadow-[inset_3px_3px_6px_rgba(0,0,0,0.3)]" mark={<Corner />}>Linie</PopCell>
        <PopCell mark={<Corner />} />
        <PopCell mark={<Corner />} />
        <PopCell />
        <PopCell mark={<Corner />} />
        <PopCell><span className="block pt-[24px] pl-[10px] text-left">a</span></PopCell>
        <PopCell />
        <PopCell />
        <PopCell><span className="block pl-[11px] text-left">l</span></PopCell>
        <PopCell><span className="block pl-[6px] text-left">A<br /><span className="pl-[2px]">p</span></span></PopCell>
      </div>
    </div>
    <div className="absolute top-[370px] left-[200px] w-[125px] border border-[#77777a] bg-[#ececee] p-[4px] pb-[6px]">
      <div className="border border-[#77777a]">
        <PopCell>Frei</PopCell>
        <PopCell>2 Punkte</PopCell>
        <PopCell>Rechtwinkl.<br />von</PopCell>
        <PopCell>Rechtwinkl.<br />zu</PopCell>
        <PopCell>Tangente<br />von</PopCell>
        <PopCell>Horizontal</PopCell>
        <PopCell>Vertikal</PopCell>
        <PopCell>Winkel</PopCell>
        <PopCell>Ausgangs-<br />pkt. setzen</PopCell>
      </div>
    </div>

    <Frame className="-top-[3px] -right-[4px] bottom-[6px] left-0" />
    <Badge letter="G" className="top-[678px] right-[4px]" />
  </div>
);

const STATUS = 'bg-[linear-gradient(to_bottom,#b4b4b4_0%,#cdcdcd_50%,#a4a4a4_100%)]';

const StatusBar = () => (
  <div className="flex h-[136px] bg-[#7c7c7c] text-[18px] text-[#111]">
    <div className="relative mr-[8px] flex-1">
      <div className={`flex h-[68px] items-start gap-[14px] pt-[16px] pl-[19px] leading-[20px] ${STATUS}`}>
        <svg viewBox="0 0 24 20" className="h-[19px] w-[23px]" fill="#eee" stroke="#3a2a2c" strokeWidth="2" aria-hidden="true">
          <path d="M2 2h20v11H10l-4 5v-5H2z" />
          <path d="M5 6h13M5 9h9" stroke={R} />
        </svg>
        Bereit
      </div>
      <div className={`h-[68px] pt-[8px] pl-[19px] ${STATUS}`}>
        <AlertTriangle className="h-[23px] w-[23px] text-[#3a2a2c]" />
      </div>
      <Frame className="inset-x-0 top-0 h-[73px]" />
      <Frame className="inset-x-0 top-[64px] h-[72px]" />
      <div className="absolute inset-y-0 right-0 z-40 flex w-[75px] flex-col items-center bg-[#ea637b] pt-[3px] pr-[9px]">
        <Letter letter="D" />
        <Letter letter="E" />
      </div>
    </div>
    <div className={`relative mr-[8px] w-[710px] pt-[14px] pl-[17px] ${STATUS}`}>
      <h2 className="flex items-center gap-[21px] leading-[22px] font-bold text-[#1a5a9c]">
        <svg viewBox="0 0 14 24" className="h-[24px] w-[14px]" aria-hidden="true"><circle cx="7" cy="4" r="3" fill="#fff" stroke="#444" /><path d="M3 9h6v11h3v3H2v-3h3v-8H3z" fill="#fff" stroke="#444" /></svg>
        Objekteigenschaften
      </h2>
      <table className="mt-[14px] text-left leading-[23px]">
        <tbody>
          <tr><th className="w-[218px] p-0">Teilename/Größe</th><td className="p-0 text-[#98509c]">11_BO_333_444_555_SL34_777_888_999_AAA_</td></tr>
          <tr><th className="p-0">Gradiertab./Größensatz</th><td className="p-0 text-[#98509c]">32-38-62</td></tr>
          <tr><th className="p-0">Attribute</th><td className="p-0" /></tr>
        </tbody>
      </table>
      <Frame className="inset-0" />
      <Badge letter="H" className="top-[38px] right-[6px]" />
    </div>
    <div className={`relative w-[366px] pt-[14px] pl-[17px] ${STATUS}`}>
      <h2 className="flex items-center gap-[13px] leading-[24px] font-bold text-[#1a5a9c]">
        <svg viewBox="0 0 24 12" className="h-[12px] w-[24px]" aria-hidden="true"><path d="M1 1h22v10H1z" fill="#fff" stroke="#333" strokeWidth="2" /><path d="M5 2v4M9 2v3M13 2v4M17 2v3" stroke={R} /></svg>
        Längenmaß
      </h2>
      <ul className="mt-[14px] leading-[23px] font-bold">
        <li>Formel</li>
        <li>Summe</li>
        <li>Verlauf</li>
      </ul>
      <Frame className="inset-y-0 -right-[4px] left-0" />
      <Badge letter="I" className="top-[30px] right-[4px]" />
    </div>
  </div>
);

const Logo = () => (
  <svg viewBox="0 0 224 120" className="h-[120px] w-[224px]" aria-label="ESB">
    <defs>
      <linearGradient id="foldA" x1="0" x2="1"><stop offset=".5" stopColor="#ea637b" /><stop offset="1" stopColor="#c4122a" /></linearGradient>
      <linearGradient id="foldB" x1="0" x2="1"><stop offset="0" stopColor="#c4122a" /><stop offset="1" stopColor="#ea637b" /></linearGradient>
    </defs>
    <path fill="#ea637b" fillRule="evenodd" d="M104 0h93q25 4 26 31 0 11-6 19 6 8 6 17-2 28-26 32h-93V78h42q7-2 7-9t-7-9h-42V39h6q-3-9 0-19h-6zM133 20q-9 2-9 9.500t9 9.500h60q9-2 9-9.500t-9-9.500zM173 60q1 9-1 18h22q8-2 8-9t-8-9z" />
    {[0, 39, 78].map(y => (
      <g key={y} transform={`translate(0 ${y})`}>
        <path d="M0 19h84v21H0z" fill="url(#foldA)" />
        <path d="M82 19Q87 2 101 0h6v20h-6q-14 3-18 20z" fill="url(#foldB)" />
      </g>
    ))}
  </svg>
);

const App: React.FC = () => (
  <div className="flex min-h-screen items-start bg-white pt-[88px] pb-[84px] pl-[115px] font-['Liberation_Sans',Arial,sans-serif] text-[#1c1c1c]">
    <svg className="absolute h-0 w-0" aria-hidden="true">
      <defs>
        <linearGradient id="paper" x1="0" x2="1" y1="0" y2="1"><stop offset="0" stopColor="#c4c4c4" /><stop offset="1" stopColor="#fff" /></linearGradient>
      </defs>
    </svg>

    <main className="min-w-0 flex-1 shadow-[14px_14px_24px_rgba(0,0,0,0.65)]">
      <header className="flex h-[37px] items-center justify-between bg-[#f3f3f3] pr-[24px] pl-[3px] font-['Noto_Sans',sans-serif] text-[17px]">
        <span className="flex items-center gap-[9px] whitespace-pre">
          <Icon className="h-[24px] w-[24px] bg-[#5f88a8]"><path d="M8 6v34h30L8 6M24 26l18-18M28 8l14 16" stroke="#eef4f8" strokeWidth="4" /></Icon>
          cad.assyst  ESB Fashion Academy
        </span>
        <span className="flex items-center gap-[51px] text-[#111]">
          <button type="button" aria-label="Minimieren"><Minus className="h-[20px] w-[20px]" strokeWidth={1.5} /></button>
          <button type="button" aria-label="Wiederherstellen"><Copy className="h-[17px] w-[17px] -scale-x-100" /></button>
          <button type="button" aria-label="Beenden"><X className="h-[22px] w-[22px]" strokeWidth={1.5} /></button>
        </span>
      </header>

      <div className="relative z-40 bg-white">
        <nav className="relative flex h-[31px] w-[780px] items-center gap-[20px] pb-[2px] pl-[11px] font-['Noto_Sans',sans-serif] text-[17px] leading-[20px]">
          {MENU.map(m => <button key={m} type="button">{m}</button>)}
          <Frame className="-top-[9px] left-0 h-[45px] w-full" />
          <Badge letter="A" className="-top-[22px] left-[775px]" />
        </nav>
      </div>

      <div className="flex">
        <div className="flex min-w-0 flex-1 flex-col">
          <Toolbar />
          <div className="flex flex-1">
            <SmartGuide />
            <section className="relative min-w-0 flex-1 bg-[#b2b2b2]">
              <Drawing />
              <Frame className="top-0 right-[14px] bottom-[6px] left-[10px]" />
              <Badge letter="F" className="top-[604px] right-[18px]" />
            </section>
          </div>
        </div>
        <Tools />
      </div>

      <StatusBar />
    </main>

    <aside className="flex w-[406px] shrink-0 flex-col">
      <div className="pt-[12px] pl-[89px] text-[#ea637b]">
        <Logo />
        <p className="mt-[14px] text-[32px] leading-[39px] font-bold tracking-[10px]">ESB<br />FASHION<br />ACADEMY</p>
      </div>
      <dl className="mt-[744px] grid grid-cols-[49px_1fr] pl-[49px] leading-[61px]">
        {LEGEND.map(([key, text]) => (
          <React.Fragment key={key}>
            <dt className="text-[32px] font-bold text-[#ea637b] font-['DejaVu_Sans',sans-serif] [-webkit-text-stroke:2px_#ea637b]">{key}</dt>
            <dd className="text-[28px] whitespace-nowrap font-['Noto_Sans',sans-serif]">{text}</dd>
          </React.Fragment>
        ))}
      </dl>
    </aside>
  </div>
);

export default App;
